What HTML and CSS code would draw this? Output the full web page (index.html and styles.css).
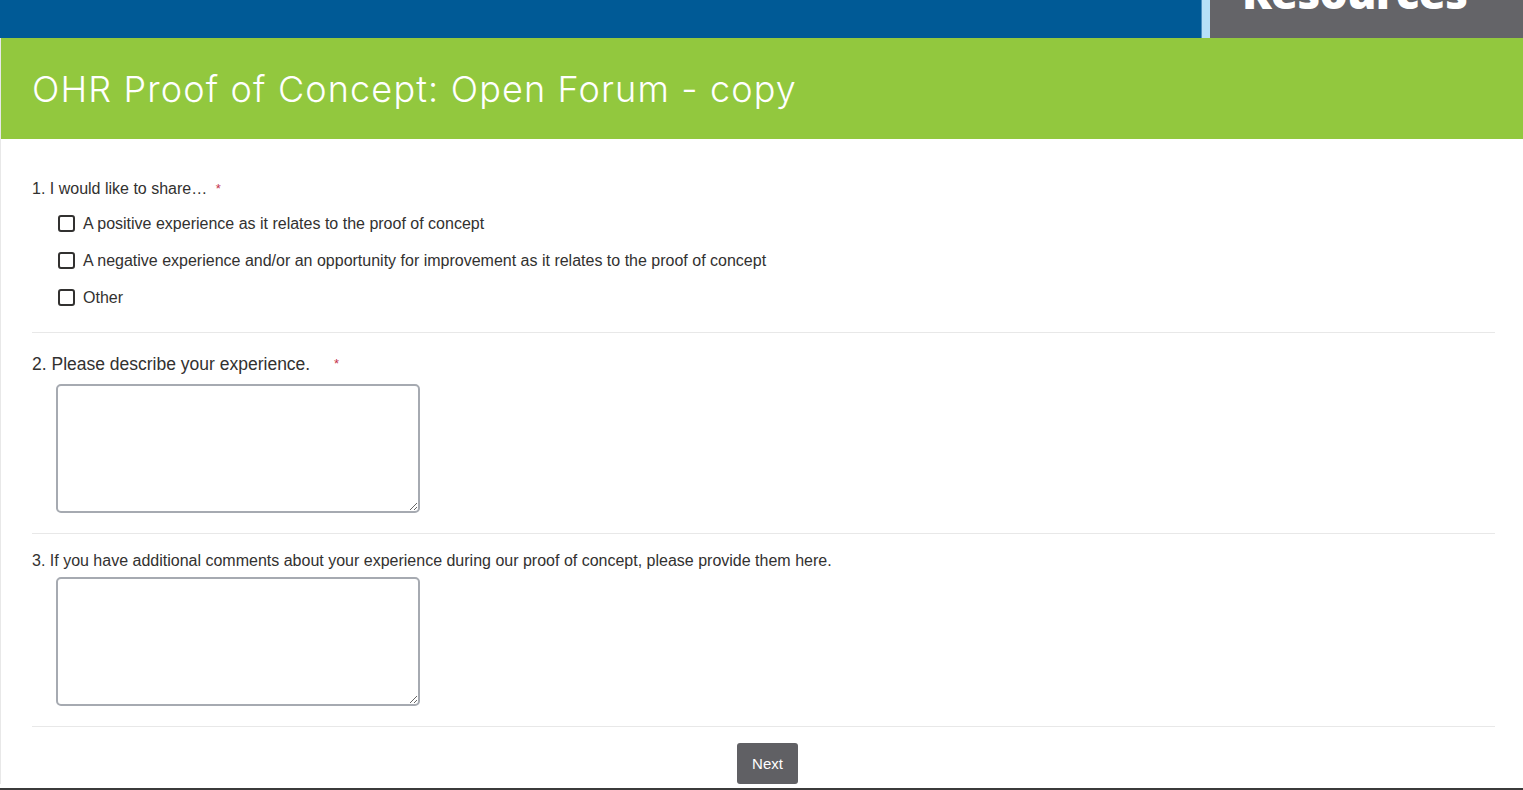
FILE: index.html
```html
<!DOCTYPE html>
<html lang="en">
<head>
    <meta charset="UTF-8">
    <title>OHR Proof of Concept: Open Forum - copy</title>
    <link rel="stylesheet" href="styles.css">
</head>
<body>
    <header class="top-bar">
        <div class="top-bar-fill"></div>
        <div class="top-bar-stripe"></div>
        <div class="top-bar-brand"><span>Resources</span></div>
    </header>

    <main class="survey">
        <div class="survey-banner">
            <h1>OHR Proof of Concept: Open Forum - copy</h1>
        </div>

        <form class="survey-body">
            <section class="question">
                <div class="question-title q1">1. I would like to share… <span class="required">*</span></div>
                <ul class="choices">
                    <li><label><span class="box"></span>A positive experience as it relates to the proof of concept</label></li>
                    <li><label><span class="box"></span>A negative experience and/or an opportunity for improvement as it relates to the proof of concept</label></li>
                    <li><label><span class="box"></span>Other</label></li>
                </ul>
            </section>

            <section class="question">
                <div class="question-title q2">2. Please describe your experience. <span class="required">*</span></div>
                <textarea class="answer"></textarea>
            </section>

            <section class="question">
                <div class="question-title q3">3. If you have additional comments about your experience during our proof of concept, please provide them here.</div>
                <textarea class="answer"></textarea>
            </section>

            <div class="actions">
                <button type="button" class="next-button">Next</button>
            </div>
        </form>
    </main>
</body>
</html>
```

FILE: styles.css
```css
body {
    margin: 0;
    padding: 0;
    height: 790px;
    overflow: hidden;
    background-color: #ffffff;
    font-family: 'Liberation Sans', Arial, sans-serif;
    color: #323130;
    box-sizing: border-box;
    border-bottom: 2px solid #3b3b3b;
}

.top-bar {
    display: flex;
    height: 38px;
    background-color: #005a96;
}

.top-bar-fill {
    flex: 1;
}

.top-bar-stripe {
    width: 8px;
    background-color: #b6e0f7;
    border-left: 1px solid #4a8fc0;
}

.top-bar-brand {
    width: 313px;
    background-color: #646468;
    overflow: hidden;
}

.top-bar-brand span {
    display: block;
    margin: -33px 0 0 32px;
    font-family: 'Open Sans', sans-serif;
    font-weight: 800;
    font-size: 44px;
    line-height: 50px;
    color: #ffffff;
    letter-spacing: -0.7px;
}

.survey {
    border-left: 1px solid #e8e8e8;
}

.survey-banner {
    background-color: #92c83e;
    height: 101px;
    display: flex;
    align-items: center;
    padding-left: 31px;
}

.survey-banner h1 {
    margin: 0;
    font-family: 'Inter', sans-serif;
    font-weight: 300;
    font-size: 36px;
    color: #ffffff;
    letter-spacing: 1.15px;
}

.survey-body {
    padding: 0 28px 0 31px;
}

.question {
    border-bottom: 1px solid #e8e8e8;
}

.question-title {
    font-size: 16px;
    line-height: 20px;
}

.q1 {
    padding-top: 40px;
}

.q2 {
    font-size: 17.5px;
    padding-top: 21px;
}

.q3 {
    padding-top: 17px;
}

.required {
    color: #c4314b;
    font-size: 13px;
    margin-left: 4px;
    vertical-align: top;
}

.q2 .required {
    margin-left: 19px;
}

.choices {
    list-style: none;
    margin: 6px 0 0;
    padding: 0 0 16px 26px;
}

.choices li {
    height: 37px;
    display: flex;
    align-items: center;
}

.choices label {
    display: flex;
    align-items: center;
    font-size: 16px;
}

.box {
    width: 13px;
    height: 13px;
    border: 2px solid #323130;
    border-radius: 3px;
    margin-right: 8px;
}

.answer {
    display: block;
    width: 364px;
    height: 129px;
    box-sizing: border-box;
    margin: 10px 0 20px 24px;
    border: 2px solid #a6aab1;
    border-radius: 5px;
    font-family: inherit;
}

.q3 + .answer {
    margin-top: 6px;
}

.actions {
    display: flex;
    justify-content: center;
    padding-top: 16px;
}

.next-button {
    width: 61px;
    height: 41px;
    margin-left: 8px;
    background-color: #606064;
    color: #ffffff;
    border: none;
    border-radius: 3px;
    font-family: 'Liberation Sans', Arial, sans-serif;
    font-size: 15px;
}
```
